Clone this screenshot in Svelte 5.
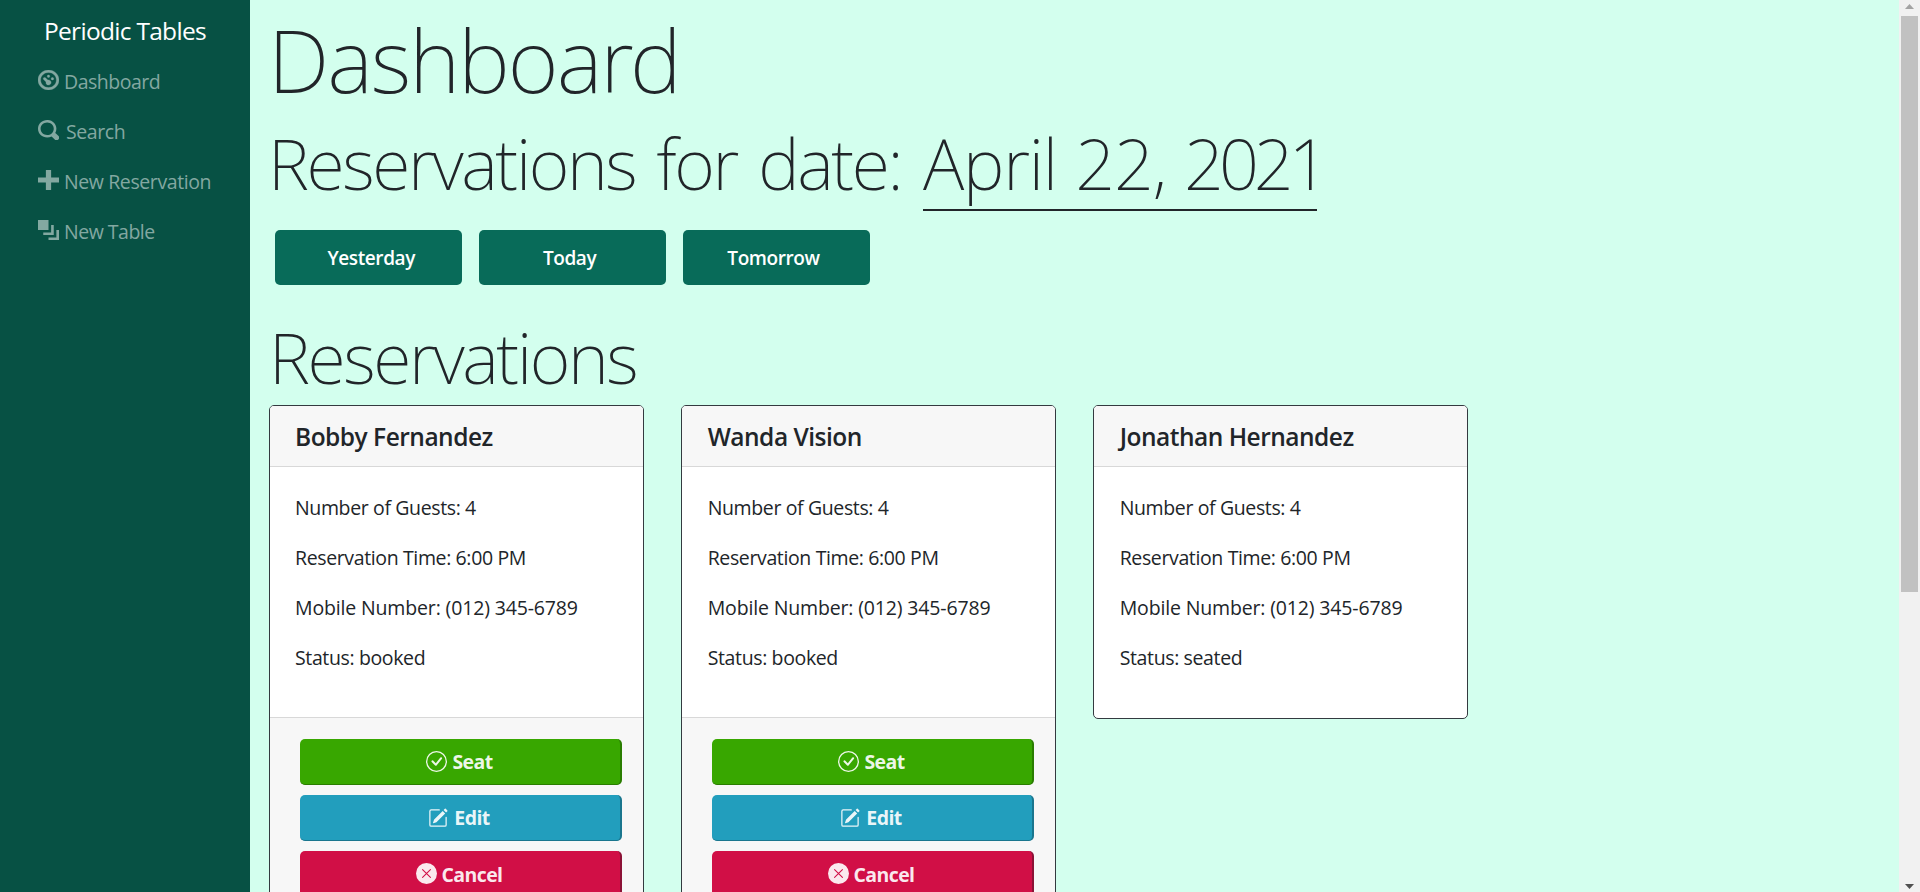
<script>
  const nav = [
    { icon: 'dashboard', label: 'Dashboard', cls: 'n-dash' },
    { icon: 'search', label: 'Search', cls: 'n-search' },
    { icon: 'plus', label: 'New Reservation', cls: 'n-res' },
    { icon: 'layers', label: 'New Table', cls: 'n-table' },
  ];
  const days = ['Yesterday', 'Today', 'Tomorrow'];
  const reservations = [
    { name: 'Bobby Fernandez', status: 'booked' },
    { name: 'Wanda Vision', status: 'booked' },
    { name: 'Jonathan Hernandez', status: 'seated' },
  ];
</script>

<div class="page">
  <aside>
    <div class="brand">Periodic Tables</div>
    <nav>
      {#each nav as item}
        <a href="#top" class={item.cls}>
          <svg width="21" height="20" viewBox="0 0 8 8" preserveAspectRatio="none" fill="currentColor">
            {#if item.icon === 'dashboard'}
              <path d="M4 0c-2.2 0-4 1.8-4 4s1.800 4 4 4 4-1.800 4-4-1.800-4-4-4zm0 1c1.660 0 3 1.340 3 3s-1.340 3-3 3-3-1.340-3-3 1.340-3 3-3zm0 1c-.28 0-.5.22-.5.5s.22.5.5.5.5-.22.5-.5-.22-.5-.5-.5zm-1.660 1a.5.5 0 0 0-.19.840l.910.910c-.2.840.340 1.220.940 1.250.550 0 1-.450 1-1 0-.550-.450-1-1-1-.090 0-.170.010-.250.030l-.910-.910a.5.5 0 0 0-.440-.130.5.5 0 0 0-.060 0zm3.160 0c-.28 0-.5.22-.5.5s.22.5.5.5.5-.22.5-.5-.22-.5-.5-.5z" stroke="currentColor" stroke-width=".12" />
            {:else if item.icon === 'search'}
              <path d="M3.500 0c-1.930 0-3.500 1.570-3.500 3.500s1.570 3.500 3.500 3.500c.590 0 1.170-.140 1.660-.410a1 1 0 0 0 .130.130l1 1a1.020 1.020 0 1 0 1.440-1.440l-1-1a1 1 0 0 0-.160-.130c.270-.490.440-1.060.440-1.660 0-1.930-1.550-3.500-3.500-3.500zm0 1c1.390 0 2.500 1.110 2.500 2.500 0 .660-.240 1.270-.660 1.720l-.030.030a1 1 0 0 0-.130.130c-.440.400-1.040.630-1.690.630-1.390 0-2.500-1.110-2.500-2.500s1.110-2.500 2.500-2.500z" />
            {:else if item.icon === 'plus'}
              <path d="M3 0v3h-3v2h3v3h2v-3h3v-2h-3v-3h-2z" />
            {:else}
              <path d="M0 0v4h4v-4h-4zm5 2v3h-3v1h4v-4h-1zm2 2v3h-3v1h4v-4h-1z" />
            {/if}
          </svg>
          <span>{item.label}</span>
        </a>
      {/each}
    </nav>
  </aside>

  <main>
    <h1>Dashboard</h1>
    <h2 class="for-date">
      <span class="lead">Reservations for date:</span>
      <span class="date">April 22, <span class="year">2021</span></span>
    </h2>
    <div class="days">
      {#each days as day}
        <button class="day">{day}</button>
      {/each}
    </div>
    <h2 class="section">Reservations</h2>
    <div class="cards">
      {#each reservations as r}
        <article>
          <header>{r.name}</header>
          <div class="body">
            <p class="guests">Number of Guests: 4</p>
            <p class="time">Reservation Time: 6:00 PM</p>
            <p class="mobile">Mobile Number: (012) 345-6789</p>
            <p class="status">Status: {r.status}</p>
          </div>
          {#if r.status === 'booked'}
            <footer>
              <button class="act seat">
                <svg width="21" height="21" viewBox="0 0 16 16" fill="currentColor">
                  <path d="M8 15A7 7 0 1 1 8 1a7 7 0 0 1 0 14zm0 1A8 8 0 1 0 8 0a8 8 0 0 0 0 16z" />
                  <path d="M10.970 4.970a.235.235 0 0 0-.020.022L7.477 9.417 5.384 7.323a.75.75 0 0 0-1.060 1.060L6.970 11.030a.75.75 0 0 0 1.079-.020l3.992-4.990a.75.75 0 0 0-1.071-1.050z" />
                </svg>
                <span>Seat</span>
              </button>
              <button class="act edit">
                <svg width="20" height="20" viewBox="0 0 16 16" fill="currentColor">
                  <path d="M15.502 1.940a.5.5 0 0 1 0 .706L14.459 3.690l-2-2L13.502.646a.5.5 0 0 1 .707 0l1.293 1.293zm-1.750 2.456-2-2L4.939 9.210a.5.5 0 0 0-.121.196l-.805 2.414a.25.25 0 0 0 .316.316l2.414-.805a.5.5 0 0 0 .196-.120l6.813-6.814z" />
                  <path fill-rule="evenodd" d="M1 13.500A1.500 1.500 0 0 0 2.500 15h11a1.500 1.500 0 0 0 1.500-1.500v-6a.5.5 0 0 0-1 0v6a.5.5 0 0 1-.5.5h-11a.5.5 0 0 1-.5-.5v-11a.5.5 0 0 1 .5-.5H9a.5.5 0 0 0 0-1H2.500A1.500 1.500 0 0 0 1 2.500v11z" />
                </svg>
                <span>Edit</span>
              </button>
              <button class="act cancel">
                <svg width="21" height="21" viewBox="0 0 16 16">
                  <circle cx="8" cy="8" r="8" fill="currentColor" />
                  <path d="M5 5l6 6M11 5l-6 6" fill="none" stroke="#d10f46" stroke-width=".8" stroke-linecap="round" />
                </svg>
                <span>Cancel</span>
              </button>
            </footer>
          {/if}
        </article>
      {/each}
    </div>
  </main>

  <div class="scrollbar">
    <svg width="9" height="5" viewBox="0 0 9 5" fill="#a3a3a3"><path d="M4.500 0 9 5H0z" /></svg>
    <div class="thumb"></div>
    <svg class="down" width="9" height="5" viewBox="0 0 9 5" fill="#505050"><path d="M0 0H9L4.500 5z" /></svg>
  </div>
</div>

<style>
  :global(body) { overflow: hidden; }
  .page {
    display: flex;
    width: 1920px;
    height: 892px;
    overflow: hidden;
    background: #d3ffee;
    color: #212529;
    font-family: "Open Sans", "Noto Sans", sans-serif;
    font-size: 19.5px;
    line-height: 30px;
    white-space: nowrap;
  }
  .page *, .page { box-sizing: border-box; }
  aside { width: 250px; flex: none; background: #075144; padding-top: 12px; }
  .brand {
    padding-left: 44px;
    color: #fff;
    font-size: 24.5px;
    line-height: 37px;
    letter-spacing: -0.7px;
  }
  nav { display: flex; flex-direction: column; padding: 7px 0 0 38px; }
  nav a {
    display: flex;
    gap: 5px;
    height: 50px;
    color: #83a8a1;
    text-decoration: none;
    line-height: 52px;
    letter-spacing: -0.4px;
  }
  nav svg { flex: none; margin-top: 14px; }
  nav .n-search { gap: 7px; }
  nav .n-dash, nav .n-table { letter-spacing: -0.5px; }
  main { flex: 1; min-width: 0; padding: 5px 0 0 19px; }
  h1, h2 { margin: 0; font-family: "Noto Sans", "Open Sans", sans-serif; font-weight: 200; }
  h1 { margin-left: -1px; font-size: 87.5px; line-height: 108px; letter-spacing: -2px; }
  h2 { font-size: 70px; line-height: 84px; letter-spacing: -2.4px; }
  .for-date { display: flex; margin-top: 8px; }
  .lead { width: 654px; margin-left: -1px; margin-right: 1px; word-spacing: 5.5px; }
  .date {
    width: 394px;
    height: 90px;
    border-bottom: 2px solid #212529;
    letter-spacing: -1.2px;
    word-spacing: 1.5px;
  }
  .year { letter-spacing: -5px; }
  .days { display: flex; gap: 16.5px; padding: 19px 0 0 6px; }
  button { border: 0; padding: 0; font-family: inherit; color: #fff; }
  .day {
    width: 187.4px;
    height: 55px;
    padding-right: 6px;
    border-radius: 5px;
    background: #086b59;
    font-size: 19px;
    font-weight: 600;
    letter-spacing: -0.4px;
  }
  .day:first-child { padding: 0 0 0 5px; }
  .section { margin-top: 30px; }
  .cards { display: flex; align-items: flex-start; gap: 37px; margin-top: 6px; }
  article {
    width: 375px;
    min-height: 314px;
    border: 1px solid #343a40;
    border-radius: 5px;
    background: #fff;
    overflow: hidden;
  }
  article + article header, article + article .body { padding-left: 25.7px; }
  header {
    height: 61px;
    padding: 16px 25px 14px;
    border-bottom: 1px solid #d8d8d8;
    background: #f7f7f7;
    font-size: 24.5px;
    font-weight: 600;
    letter-spacing: -0.5px;
  }
  .body { height: 250px; padding: 26px 25px 24px; }
  p { margin: 0 0 20px; letter-spacing: -0.37px; }
  .mobile { letter-spacing: -0.15px; }
  footer {
    display: flex;
    flex-direction: column;
    gap: 10px;
    height: 210px;
    padding: 21px 21px 0 30px;
    border-top: 1px solid #d8d8d8;
    background: #f7f7f7;
  }
  .act {
    display: flex;
    align-items: center;
    justify-content: center;
    gap: 5px;
    height: 46px;
    flex: none;
    border-radius: 5px;
    border-style: solid;
    border-width: 0 2px 1px 0;
    font-size: 19.5px;
    font-weight: 700;
    letter-spacing: -0.6px;
  }
  .act svg { color: #ffffffe8; }
  .act span { color: #ffffffe8; }
  .seat { padding-right: 1px; background: #38a700; border-color: #2a7d00; }
  .edit { padding-right: 2px; gap: 6px; background: #229ebd; border-color: #1a768e; }
  .cancel { padding-right: 2px; background: #d10f46; border-color: #8c1236; }
  .cancel span { padding-top: 2px; }
  .scrollbar {
    display: flex;
    flex-direction: column;
    align-items: center;
    width: 21px;
    flex: none;
    padding: 4px 0 3px;
    background: #f1f1f1;
  }
  .thumb { width: 17px; height: 576px; margin-top: 7px; background: #c1c1c1; }
  .down { margin-top: auto; }
</style>
